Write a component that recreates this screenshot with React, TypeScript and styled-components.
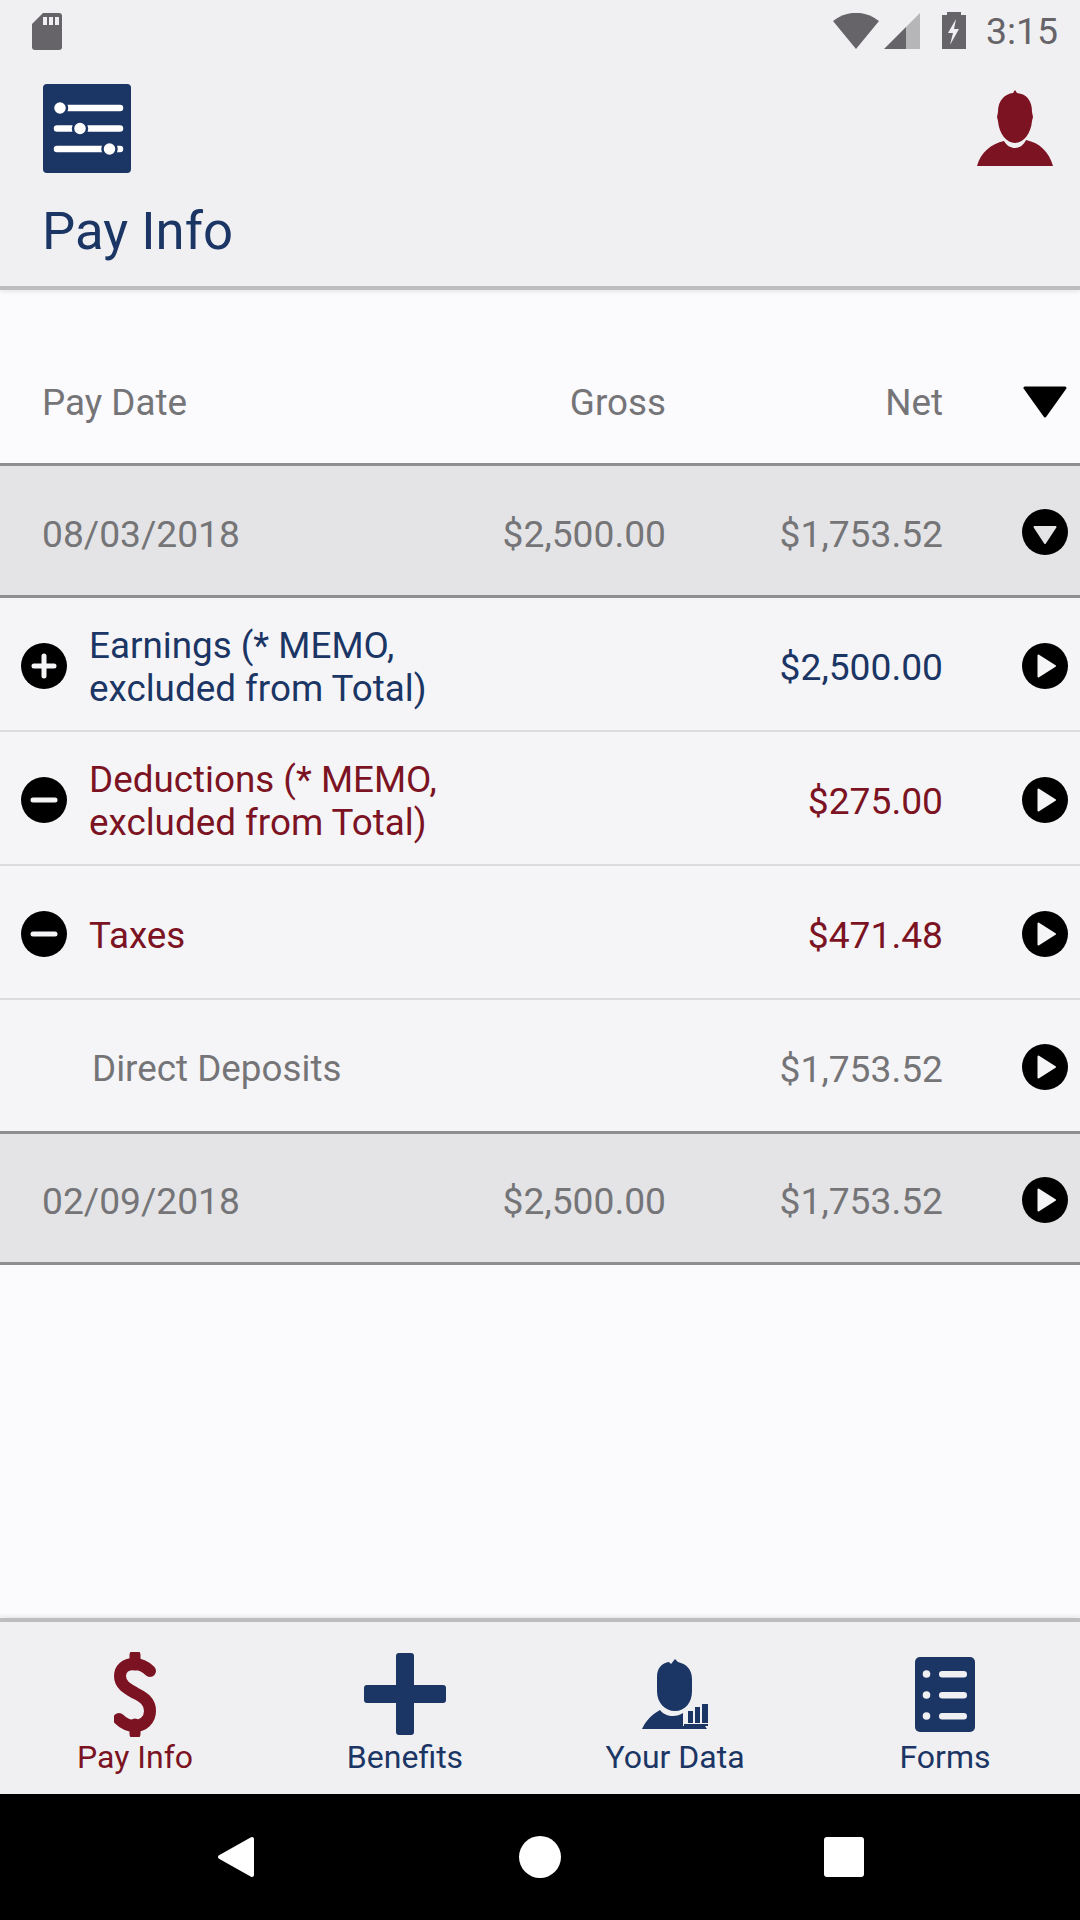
import React from 'react';
import styled, { createGlobalStyle } from 'styled-components';

const NAVY = '#1b3564';
const MAROON = '#7b1323';
const GREY = '#757578';

type Tone = 'navy' | 'maroon' | 'grey';

const toneColor = (tone: Tone) => (tone === 'navy' ? NAVY : tone === 'maroon' ? MAROON : GREY);

const GlobalStyle = createGlobalStyle`
  html, body {
    margin: 0;
    padding: 0;
    background: #fbfafd;
  }
  * {
    box-sizing: border-box;
  }
`;

const CircleIcon: React.FC<{ kind: 'plus' | 'minus' | 'right' | 'down' }> = ({ kind }) => (
  <svg width="46" height="46" viewBox="0 0 46 46">
    <circle cx="23" cy="23" r="23" fill="#000" />
    {kind === 'plus' && <path d="M23 13v20M13 23h20" stroke="#f5f5f8" strokeWidth="5" strokeLinecap="round" />}
    {kind === 'minus' && <path d="M12 23h22" stroke="#f5f5f8" strokeWidth="5" strokeLinecap="round" />}
    {kind === 'right' && <path d="M16.5 12.5 33 23 16.5 33.5z" fill="#f5f5f8" stroke="#f5f5f8" strokeWidth="2" strokeLinejoin="round" />}
    {kind === 'down' && <path d="M12.5 18h21L23 34z" fill="#e4e4e7" stroke="#e4e4e7" strokeWidth="2" strokeLinejoin="round" />}
  </svg>
);

const StatusIcons = () => (
  <>
    <svg width="46" height="36" viewBox="0 0 46 36">
      <path d="M0 8C14-3 32-3 46 8L23 36z" fill="#666468" />
    </svg>
    <svg width="36" height="36" viewBox="0 0 36 36">
      <path d="M22 14 36 0v36H22z" fill="#b6b5b8" />
      <path d="M0 36 22 14v22z" fill="#666468" />
    </svg>
    <BatteryIcon width="24" height="37" viewBox="0 0 24 37">
      <path d="M5 3V0h14v3h5v34H0V3z" fill="#666468" />
      <path d="M14 7 6 21h5l-3 12 9-16h-5z" fill="#f0f0f2" />
    </BatteryIcon>
  </>
);

const PersonIcon = () => (
  <svg width="76" height="76" viewBox="0 0 76 76" fill={MAROON}>
    <path d="M38 0l2 3c10 1 15 8 15 19l1 5-1 4c-1 13-9 22-17 22s-16-9-17-22l-1-4 1-5c0-12 7-18 15-19z" />
    <path d="M0 76c4-14 14-22 27-25 3 5 7 7 11 7s8-2 11-8c14 3 23 12 27 26z" />
  </svg>
);

const FilterLogo = () => (
  <svg width="88" height="89" viewBox="0 0 88 89">
    <rect width="88" height="89" rx="4" fill={NAVY} />
    <g stroke="#fff" strokeWidth="6.500" strokeLinecap="round">
      <path d="M16 24h61M14 44.500h63M14 65h63" />
    </g>
    <g fill="#fff" stroke={NAVY} strokeWidth="2.500">
      <circle cx="17" cy="24" r="7" />
      <circle cx="37" cy="44.500" r="7" />
      <circle cx="66.500" cy="65" r="7" />
    </g>
  </svg>
);

const DollarNavIcon = () => (
  <svg width="42" height="85" viewBox="0 0 42 85" fill="none" stroke={MAROON}>
    <path d="M21 3v10M21 72v10" strokeWidth="11" strokeLinecap="round" />
    <path d="M36 19C31 14 25 12 20 12 11 12 6 17 6 24c0 9 8 13 15 17 8 4 15 8 15 18 0 9-7 15-15 15-7 0-12-3-16-7" strokeWidth="12" strokeLinecap="round" />
  </svg>
);

const PlusNavIcon = () => (
  <svg width="82" height="82" viewBox="0 0 82 82" fill={NAVY}>
    <rect x="32" width="18" height="82" rx="3" />
    <rect y="32" width="82" height="18" rx="3" />
  </svg>
);

const DataNavIcon = () => (
  <svg width="66" height="70" viewBox="0 0 66 70" fill={NAVY}>
    <path d="M33 0l3 3c8 2 14 7 14 17v12c0 12-7 20-17 20s-18-8-18-20V18c0-9 5-14 12-15l2 2z" />
    <path d="M0 70c3-7 9-14 18-19 3 4 8 6 13 6 4 0 7-1 10-3v13h22l2 3z" />
    <path d="M46 52h5v12h-5zM53 48h5v16h-5zM60 45h6v19h-6z" />
    <path d="M42 65h24v2H42z" />
  </svg>
);

const FormsNavIcon = () => (
  <svg width="60" height="75" viewBox="0 0 60 75">
    <rect width="60" height="75" rx="5" fill={NAVY} />
    <g fill="#f0f0f2">
      <circle cx="11.500" cy="17" r="3.800" />
      <circle cx="11.500" cy="38" r="3.800" />
      <circle cx="11.500" cy="59" r="3.800" />
      <rect x="24" y="14" width="28" height="6.500" rx="3.200" />
      <rect x="24" y="35" width="28" height="6.500" rx="3.200" />
      <rect x="24" y="56" width="28" height="6.500" rx="3.200" />
    </g>
  </svg>
);

const details = [
  { label: ['Earnings (* MEMO,', 'excluded from Total)'], amount: '$2,500.00', tone: 'navy', icon: 'plus' },
  { label: ['Deductions (* MEMO,', 'excluded from Total)'], amount: '$275.00', tone: 'maroon', icon: 'minus' },
  { label: ['Taxes'], amount: '$471.48', tone: 'maroon', icon: 'minus' },
] as const;

export default function App() {
  return (
    <Screen>
      <GlobalStyle />
      <Header>
        <StatusBar>
          <svg width="30" height="37" viewBox="0 0 30 37">
            <path d="M11 0h16a3 3 0 0 1 3 3v31a3 3 0 0 1-3 3H3a3 3 0 0 1-3-3V11z" fill="#666468" />
            <path d="M11 4h4v8h-4zM17 4h4v8h-4zM23 4h4v8h-4z" fill="#f0f0f2" />
          </svg>
          <StatusRight>
            <StatusIcons />
            <Clock>3:15</Clock>
          </StatusRight>
        </StatusBar>
        <ToolRow>
          <FilterLogo />
          <PersonSlot>
            <PersonIcon />
          </PersonSlot>
        </ToolRow>
        <Title>Pay Info</Title>
      </Header>

      <Main>
        <ColumnHead>
          <HeadCell>Pay Date</HeadCell>
          <HeadCell $right>Gross</HeadCell>
          <HeadCell $right>Net</HeadCell>
          <SortCell>
            <svg width="44" height="32" viewBox="0 0 44 32">
              <path d="M2 2h40L22 30z" fill="#000" stroke="#000" strokeWidth="3" strokeLinejoin="round" />
            </svg>
          </SortCell>
        </ColumnHead>

        <GroupRow>
          <Cell>08/03/2018</Cell>
          <Cell $right>$2,500.00</Cell>
          <Cell $right>$1,753.52</Cell>
          <ActionCell>
            <CircleIcon kind="down" />
          </ActionCell>
        </GroupRow>

        {details.map((row) => (
          <DetailRow key={row.label[0]}>
            <LeadIcon>
              <CircleIcon kind={row.icon} />
            </LeadIcon>
            <DetailLabel $tone={row.tone}>
              {row.label.map((line) => (
                <div key={line}>{line}</div>
              ))}
            </DetailLabel>
            <Cell $right $tone={row.tone}>{row.amount}</Cell>
            <ActionCell>
              <CircleIcon kind="right" />
            </ActionCell>
          </DetailRow>
        ))}

        <DetailRow>
          <LeadIcon />
          <DetailLabel $tone="grey" $indent>Direct Deposits</DetailLabel>
          <Cell $right>$1,753.52</Cell>
          <ActionCell>
            <CircleIcon kind="right" />
          </ActionCell>
        </DetailRow>

        <GroupRow $last>
          <Cell>02/09/2018</Cell>
          <Cell $right>$2,500.00</Cell>
          <Cell $right>$1,753.52</Cell>
          <ActionCell>
            <CircleIcon kind="right" />
          </ActionCell>
        </GroupRow>
      </Main>

      <TabBar>
        <Tab $tone="maroon">
          <TabIcon>
            <DollarNavIcon />
          </TabIcon>
          Pay Info
        </Tab>
        <Tab $tone="navy">
          <TabIcon>
            <PlusNavIcon />
          </TabIcon>
          Benefits
        </Tab>
        <Tab $tone="navy">
          <TabIcon>
            <DataNavIcon />
          </TabIcon>
          Your Data
        </Tab>
        <Tab $tone="navy">
          <TabIcon>
            <FormsNavIcon />
          </TabIcon>
          Forms
        </Tab>
      </TabBar>

      <SystemNav>
        <svg width="38" height="42" viewBox="0 0 38 42">
          <path d="M35 3v36L3 21z" fill="#fff" stroke="#fff" strokeWidth="4" strokeLinejoin="round" />
        </svg>
        <HomeDot />
        <RecentSquare />
      </SystemNav>
    </Screen>
  );
}

const Screen = styled.div`
  width: 1080px;
  height: 1920px;
  display: flex;
  flex-direction: column;
  overflow: hidden;
  background: #fbfafd;
  font-family: Roboto, "Liberation Sans", sans-serif;
`;

const Header = styled.header`
  position: relative;
  height: 290px;
  flex: none;
  background: #f0f0f2;
  border-bottom: 4px solid #bdbdc0;
  box-shadow: 0 2px 4px rgba(0, 0, 0, 0.08);
`;

const StatusBar = styled.div`
  height: 72px;
  padding: 13px 22px 0 32px;
  display: flex;
  justify-content: space-between;
  align-items: flex-start;
`;

const StatusRight = styled.div`
  display: flex;
  align-items: flex-start;
  gap: 5px;
`;

const BatteryIcon = styled.svg`
  margin-left: 17px;
  margin-top: -1px;
`;

const Clock = styled.span`
  margin-left: 15px;
  margin-top: -3px;
  font-size: 37.400px;
  line-height: 42px;
  color: #666468;
`;

const ToolRow = styled.div`
  margin-top: 12px;
  padding: 0 27px 0 43px;
  display: flex;
  justify-content: space-between;
  align-items: flex-start;
`;

const PersonSlot = styled.div`
  margin-top: 6px;
`;

const Title = styled.h1`
  margin: 28px 0 0;
  padding: 0 0 0 42px;
  font-size: 52.700px;
  line-height: 60px;
  font-weight: 400;
  color: ${NAVY};
`;

const Main = styled.main`
  flex: 1;
  min-height: 0;
`;

const COLUMNS = '384px 240px 277px 1fr';

const ColumnHead = styled.div`
  height: 176px;
  padding: 91px 0 0 42px;
  display: grid;
  grid-template-columns: ${COLUMNS};
  align-items: start;
  border-bottom: 3px solid #8e8e90;
`;

const HeadCell = styled.div<{ $right?: boolean }>`
  font-size: 36.800px;
  line-height: 44px;
  color: ${GREY};
  text-align: ${(p) => (p.$right ? 'right' : 'left')};
`;

const ActionCell = styled.div`
  display: flex;
  justify-content: flex-end;
  padding: 3px 12px 0 0;
`;

const SortCell = styled.div`
  display: flex;
  justify-content: flex-end;
  padding: 5px 13px 0 0;
`;

const GroupRow = styled.div<{ $last?: boolean }>`
  height: ${(p) => (p.$last ? 131 : 132)}px;
  padding-left: 42px;
  display: grid;
  grid-template-columns: ${COLUMNS};
  align-items: center;
  background: #e4e4e7;
  border-bottom: 3px solid #8e8e90;
`;

const Cell = styled.div<{ $right?: boolean; $tone?: Tone }>`
  padding-top: 6px;
  font-size: 37.200px;
  line-height: 44px;
  color: ${(p) => toneColor(p.$tone ?? 'grey')};
  text-align: ${(p) => (p.$right ? 'right' : 'left')};
`;

const DetailRow = styled.div`
  height: 134px;
  display: grid;
  grid-template-columns: 89px 1fr 241px 137px;
  align-items: center;
  background: #f5f5f8;
  border-bottom: 2px solid #dcdcde;

  &:nth-child(6) {
    border-bottom: 3px solid #8e8e90;
  }
`;

const LeadIcon = styled.div`
  padding: 3px 0 0 21px;
  display: flex;
`;

const DetailLabel = styled.div<{ $tone: Tone; $indent?: boolean }>`
  padding-top: 6px;
  padding-left: ${(p) => (p.$indent ? 3 : 0)}px;
  font-size: 36.800px;
  line-height: 43px;
  color: ${(p) => toneColor(p.$tone)};
`;

const TabBar = styled.nav`
  position: relative;
  height: 176px;
  flex: none;
  display: grid;
  grid-template-columns: repeat(4, 1fr);
  background: #f0f0f2;
  border-top: 4px solid #bdbdc0;
  box-shadow: 0 -2px 4px rgba(0, 0, 0, 0.08);
`;

const Tab = styled.div<{ $tone: Tone }>`
  padding-top: 28px;
  display: flex;
  flex-direction: column;
  align-items: center;
  font-size: 32px;
  line-height: 38px;
  color: ${(p) => toneColor(p.$tone)};
`;

const TabIcon = styled.div`
  height: 88px;
  display: flex;
  align-items: center;
  justify-content: center;
`;

const SystemNav = styled.div`
  height: 126px;
  flex: none;
  background: #000;
  padding: 0 216px 0 217px;
  display: flex;
  justify-content: space-between;
  align-items: center;
`;

const HomeDot = styled.div`
  width: 42px;
  height: 42px;
  border-radius: 50%;
  background: #fff;
`;

const RecentSquare = styled.div`
  width: 40px;
  height: 40px;
  border-radius: 3px;
  background: #fff;
`;
